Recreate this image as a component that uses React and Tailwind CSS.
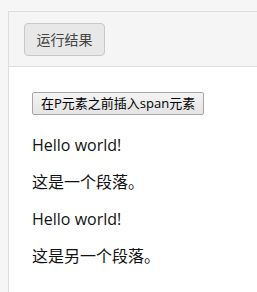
import React from 'react';

const font = { fontFamily: '"Open Sans", "Noto Sans CJK SC", sans-serif' };

// Paragraphs shown in the demo output
const lines = ['Hello world!', '这是一个段落。', 'Hello world!', '这是另一个段落。'];

const App = () => {
  return (
    <div className="min-h-[292px] bg-[#f6f6f6] pt-[11px] pl-[8px]" style={font}>
      <div className="border-l border-t border-[#dddddd] bg-white min-h-[281px]">
        <div className="flex items-center h-[55px] bg-[#f5f5f5] border-b border-[#dddddd] pl-[15px]">
          <button className="h-[33px] w-[81px] rounded-[4px] border border-[#c8c8c8] bg-[#e8e8e8] text-[14px] text-[#444444]">
            运行结果
          </button>
        </div>
        <div className="pl-[23px] pt-[23px]">
          <button className="h-[23px] px-[8px] rounded-[2px] border border-[#a6a6a6] bg-gradient-to-b from-[#f4f4f4] to-[#e4e4e4] text-[13px] leading-[21px] text-black">
            在P元素之前插入span元素
          </button>
          <div className="flex flex-col gap-[16px] mt-[20px]">
            {lines.map((t, i) => (
              <p key={i} className="text-[16px] leading-[21px] text-[#111111]">
                {t}
              </p>
            ))}
          </div>
        </div>
      </div>
    </div>
  );
};

export default App;
